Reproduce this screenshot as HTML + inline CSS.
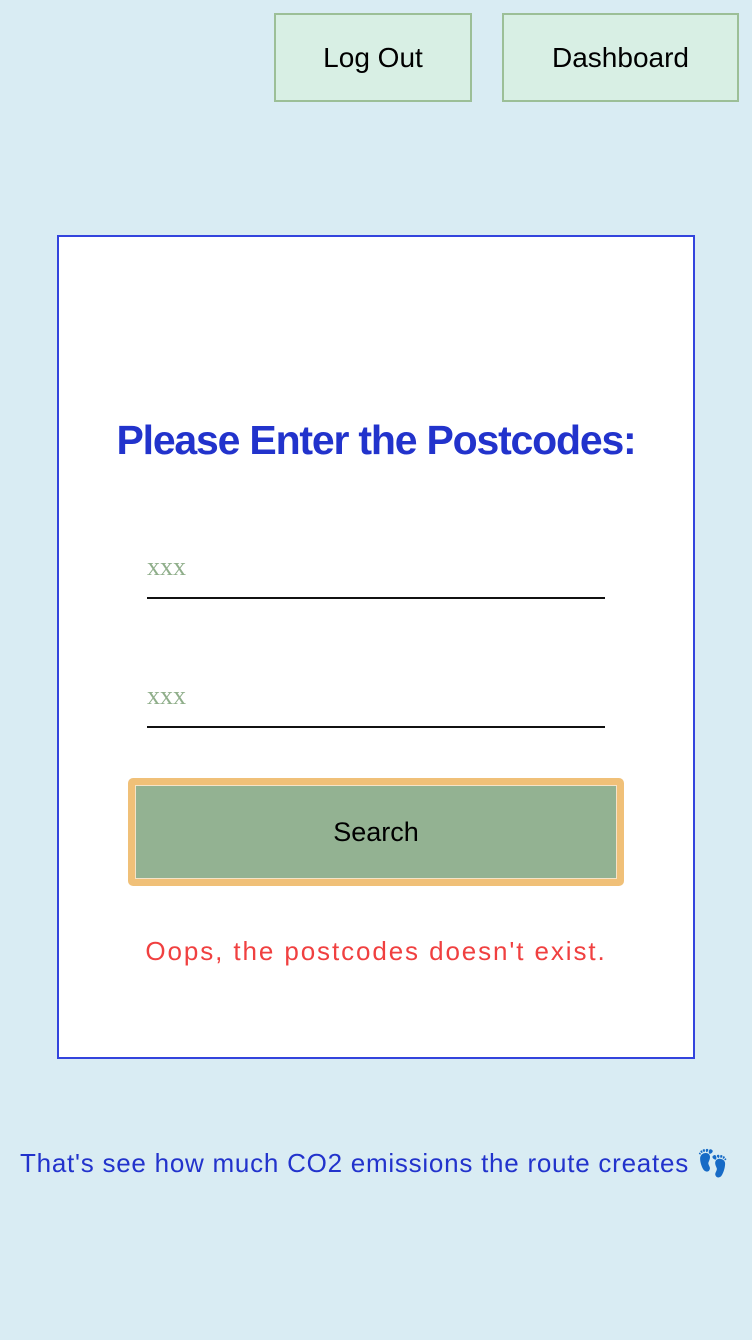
<!DOCTYPE html>
<html><head><style>
body{margin:0;width:752px;height:1340px;background:#d9ecf3;position:relative;font-family:"Liberation Sans",sans-serif;overflow:hidden}
.b{position:absolute;top:13px;height:85px;background:#d8efe4;border:2px solid #9cbf97;box-sizing:content-box;font-size:28px;display:flex;align-items:center;justify-content:center;color:#000}
.card{position:absolute;left:57px;top:235px;width:634px;height:820px;background:#fff;border:2px solid #3344dd}
h1{position:absolute;left:0;right:0;top:417px;margin:0;text-align:center;font-size:41px;color:#2233cc;font-weight:bold;letter-spacing:-1.2px}
.in{position:absolute;left:147px;width:458px;height:38px;line-height:16px;border-bottom:2px solid #111;font-family:"Liberation Serif",serif;font-size:26px;color:#8fae8a}
.s{position:absolute;left:128px;top:778px;width:496px;height:108px;background:#f0c078;border-radius:5px}
.s div{position:absolute;left:7px;top:7px;right:7px;bottom:7px;background:#93b292;border:1px solid #f5e3c8;display:flex;align-items:center;justify-content:center;font-size:27px;color:#000}
</style></head><body>
<div class="b" style="left:274px;width:194px">Log Out</div>
<div class="b" style="left:502px;width:233px">Dashboard</div>
<div class="card"></div>
<h1>Please Enter the Postcodes:</h1>
<div class="in" style="top:559px">xxx</div>
<div class="in" style="top:688px">xxx</div>
<div class="s"><div>Search</div></div>
<div style="position:absolute;left:0;right:0;top:936px;text-align:center;font-size:26px;color:#f04040;letter-spacing:1.9px">Oops, the postcodes doesn't exist.</div>
<div style="position:absolute;left:20px;top:1148px;font-size:26px;color:#2233cc;letter-spacing:0.75px;white-space:nowrap">That's see how much CO2 emissions the route creates 👣</div>
</body></html>
